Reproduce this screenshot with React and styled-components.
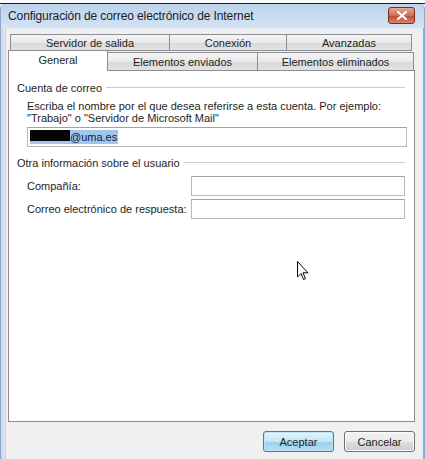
import React from "react";
import styled, { createGlobalStyle } from "styled-components";

const GlobalStyle = createGlobalStyle`
  html, body {
    margin: 0;
    padding: 0;
    background: #f0f0f0;
  }
  body {
    font-family: "Liberation Sans", Arial, sans-serif;
    font-size: 11px;
    color: #1e1e1e;
  }
`;

const Window = styled.div`
  position: relative;
  width: 425px;
  height: 459px;
  overflow: hidden;
  display: flex;
  flex-direction: column;
  background: #f0f0f0;
`;

const BehindStrip = styled.div`
  height: 3px;
  background: #fafafa;
  border-bottom: 1px solid #1a1a1a;
  flex-shrink: 0;
`;

const TitleBar = styled.div`
  height: 24px;
  flex-shrink: 0;
  display: flex;
  align-items: center;
  justify-content: space-between;
  padding: 0 9px 0 7px;
  background: linear-gradient(#bcd3ec, #c9dcf1 60%, #d6e4f4);
  border-left: 1px solid #8ea9c9;
  border-right: 1px solid #8ea9c9;
  border-radius: 5px 5px 0 0;
`;

const Title = styled.span`
  font-size: 12px;
  color: #1b1b1b;
  letter-spacing: -0.1px;
  margin-top: -1px;
`;

const CloseButton = styled.div`
  width: 25px;
  height: 15px;
  margin-top: -2px;
  border: 1px solid #7d2a1f;
  border-radius: 3px;
  background: linear-gradient(#e7a89b, #d36a55 50%, #c04a33 51%, #d9826c);
  display: flex;
  align-items: center;
  justify-content: center;
`;

const Body = styled.div`
  flex: 1;
  display: flex;
`;

const LeftFrame = styled.div`
  width: 4px;
  background: linear-gradient(90deg, #c7d6ea, #e3eaf4);
  border-left: 1px solid #8ea9c9;
`;

const RightFrame = styled.div`
  width: 2px;
  background: #e6edf6;
  border-right: 2px solid #7fb0e0;
`;

const Client = styled.div`
  flex: 1;
  display: flex;
  flex-direction: column;
  padding: 6px 0 0 2px;
  background: linear-gradient(#e8edf4, #f0f0f0 6px);
  border-left: 1px solid #c8d4e2;
`;

const TabRow = styled.div`
  display: flex;
  padding-left: ${(p) => p.$indent}px;
  height: ${(p) => p.$height}px;
  align-items: flex-end;
`;

const Tab = styled.div`
  width: ${(p) => p.$w}px;
  height: ${(p) => (p.$active ? p.$h + 2 : p.$h)}px;
  box-sizing: border-box;
  display: flex;
  align-items: center;
  justify-content: center;
  border: 1px solid #8c8e94;
  border-bottom: ${(p) => (p.$active ? "none" : "1px solid #8c8e94")};
  margin-left: -1px;
  background: ${(p) =>
    p.$active ? "#ffffff" : "linear-gradient(#f4f4f4, #e9e9e9 50%, #d9d9d9 51%, #e2e2e2)"};
  position: relative;
  z-index: ${(p) => (p.$active ? 2 : 1)};
  font-size: 11px;
  color: #1e1e1e;
  padding-bottom: ${(p) => (p.$active ? 3 : 0)}px;
  &:first-child {
    margin-left: 0;
  }
`;

const Panel = styled.div`
  width: 407px;
  height: 352px;
  box-sizing: border-box;
  margin-top: -1px;
  background: #ffffff;
  border: 1px solid #898c95;
  padding: 10px 9px 0 8px;
  display: flex;
  flex-direction: column;
`;

const GroupHeader = styled.div`
  display: flex;
  align-items: center;
  gap: 4px;
  height: 13px;
  margin-top: ${(p) => p.$top}px;
  &::after {
    content: "";
    flex: 1;
    border-top: 1px solid #c9cdd2;
  }
`;

const Indented = styled.div`
  padding-left: 10px;
  display: flex;
  flex-direction: column;
`;

const Description = styled.div`
  line-height: 12px;
  margin-top: 6px;
`;

const TextBox = styled.div`
  box-sizing: border-box;
  height: ${(p) => p.$h || 20}px;
  width: ${(p) => p.$w}px;
  border: 1px solid #b5b8bd;
  border-top-color: #9fa3a8;
  background: #ffffff;
  display: flex;
  align-items: center;
  padding-left: 2px;
  margin-top: ${(p) => p.$top || 0}px;
`;

const Redacted = styled.span`
  display: inline-block;
  width: 40px;
  height: 11px;
  background: #050505;
`;

const Selected = styled.span`
  background: #9fc6ec;
  color: #14143a;
  line-height: 13px;
  padding-right: 1px;
`;

const FieldRow = styled.div`
  display: flex;
  align-items: center;
  justify-content: space-between;
  margin-top: ${(p) => p.$top}px;
`;

const Footer = styled.div`
  display: flex;
  justify-content: flex-end;
  gap: 10px;
  padding-top: 9px;
  width: 407px;
`;

const Button = styled.div`
  box-sizing: border-box;
  width: ${(p) => p.$w}px;
  height: 21px;
  border-radius: 3px;
  display: flex;
  align-items: center;
  justify-content: center;
  font-size: 11px;
  color: #1e1e1e;
  border: 1px solid ${(p) => (p.$primary ? "#3c7fb1" : "#707070")};
  background: ${(p) =>
    p.$primary
      ? "linear-gradient(#e5f4fc, #c4e5f6 50%, #98d1ef 51%, #b6def3)"
      : "linear-gradient(#f2f2f2, #ebebeb 50%, #dddddd 51%, #cfcfcf)"};
  box-shadow: inset 0 0 0 1px ${(p) => (p.$primary ? "#bfe3f7" : "#fbfbfb")};
`;

const Cursor = styled.svg`
  position: absolute;
  left: 297px;
  top: 261px;
`;

const App = () => {
  return (
    <>
      <GlobalStyle />
      <Window>
        <BehindStrip />
        <TitleBar>
          <Title>Configuración de correo electrónico de Internet</Title>
          <CloseButton>
            <svg width="10" height="9" viewBox="0 0 10 9">
              <path d="M1 1 L9 8 M9 1 L1 8" stroke="#ffffff" strokeWidth="2.2" strokeLinecap="square" />
            </svg>
          </CloseButton>
        </TitleBar>
        <Body>
          <LeftFrame />
          <Client>
            <TabRow $indent={2} $height={17}>
              <Tab $w={160} $h={17}>Servidor de salida</Tab>
              <Tab $w={118} $h={17}>Conexión</Tab>
              <Tab $w={126} $h={17}>Avanzadas</Tab>
            </TabRow>
            <TabRow $indent={0} $height={20}>
              <Tab $w={100} $h={19} $active>General</Tab>
              <Tab $w={151} $h={19}>Elementos enviados</Tab>
              <Tab $w={157} $h={19}>Elementos eliminados</Tab>
            </TabRow>
            <Panel>
              <GroupHeader $top={0}>Cuenta de correo</GroupHeader>
              <Indented>
                <Description>
                  Escriba el nombre por el que desea referirse a esta cuenta. Por ejemplo:
                  <br />
                  "Trabajo" o "Servidor de Microsoft Mail"
                </Description>
                <TextBox $w={380} $h={20} $top={3}>
                  <Selected>
                    <Redacted />
                    @uma.es
                  </Selected>
                </TextBox>
              </Indented>
              <GroupHeader $top={9}>Otra información sobre el usuario</GroupHeader>
              <Indented>
                <FieldRow $top={7}>
                  <span>Compañía:</span>
                  <TextBox $w={214} $h={20} />
                </FieldRow>
                <FieldRow $top={3}>
                  <span>Correo electrónico de respuesta:</span>
                  <TextBox $w={214} $h={20} />
                </FieldRow>
              </Indented>
            </Panel>
            <Footer>
              <Button $w={71} $primary>Aceptar</Button>
              <Button $w={71}>Cancelar</Button>
            </Footer>
          </Client>
          <RightFrame />
        </Body>
        <Cursor width="12" height="20" viewBox="0 0 12 20">
          <path
            d="M0.5 0.5 L0.5 16 L4 12.5 L6.5 18.5 L8.5 17.7 L6 11.8 L11 11.8 Z"
            fill="#ffffff"
            stroke="#000000"
            strokeWidth="1"
            strokeLinejoin="miter"
          />
        </Cursor>
      </Window>
    </>
  );
};

export default App;
